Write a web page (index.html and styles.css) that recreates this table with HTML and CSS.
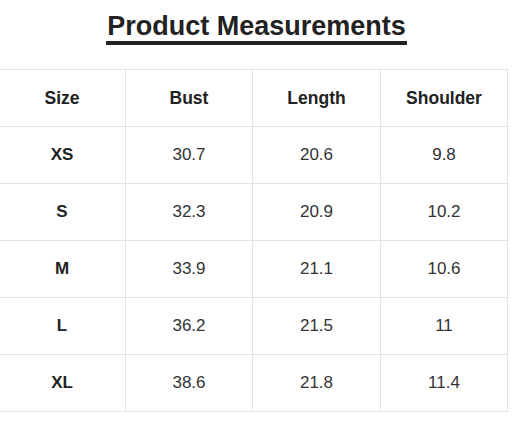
FILE: index.html
```html
<!DOCTYPE html>
<html>
<head>
<meta charset="utf-8">
<link rel="stylesheet" href="styles.css">
</head>
<body>
<div class="wrap">
  <div class="title-row"><h2 class="title">Product Measurements</h2></div>
  <table class="sizes">
    <colgroup><col class="c1"><col class="c2"><col class="c3"><col class="c4"></colgroup>
    <thead>
      <tr><th>Size</th><th>Bust</th><th>Length</th><th>Shoulder</th></tr>
    </thead>
    <tbody>
      <tr><th>XS</th><td>30.7</td><td>20.6</td><td>9.8</td></tr>
      <tr><th>S</th><td>32.3</td><td>20.9</td><td>10.2</td></tr>
      <tr><th>M</th><td>33.9</td><td>21.1</td><td>10.6</td></tr>
      <tr><th>L</th><td>36.2</td><td>21.5</td><td>11</td></tr>
      <tr><th>XL</th><td>38.6</td><td>21.8</td><td>11.4</td></tr>
    </tbody>
  </table>
</div>
</body>
</html>
```
FILE: styles.css
```css
html, body { margin: 0; padding: 0; background: #fff; }
body { font-family: "Liberation Sans", Arial, sans-serif; color: #333; }
.wrap { width: 513px; padding-top: 11px; }
.title-row { text-align: center; }
.title {
  display: inline-block;
  margin: 0;
  font-size: 27px;
  line-height: 30px;
  font-weight: bold;
  color: #222;
  border-bottom: 4px solid #222;
  padding: 0 1px;
}
.sizes {
  margin: 24px 0 0 -2px;
  border-collapse: collapse;
  table-layout: fixed;
  width: 509px;
}
.c1 { width: 127px; }
.c2 { width: 127px; }
.c3 { width: 128px; }
.c4 { width: 127px; }
.sizes th, .sizes td {
  border: 1px solid #e3e3e3;
  height: 56px;
  padding: 0;
  text-align: center;
  vertical-align: middle;
  font-size: 17px;
  color: #333;
}
.sizes th { font-weight: bold; color: #222; }
.sizes thead th { font-size: 17.5px; }
```
